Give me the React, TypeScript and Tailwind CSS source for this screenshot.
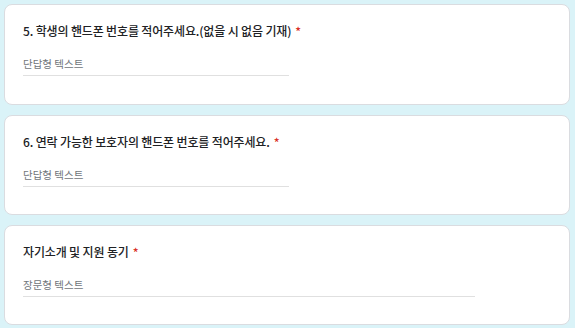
import React from "react";

const font = { fontFamily: '"Noto Sans CJK KR", "Noto Sans", Roboto, sans-serif' };

function Card({ title, placeholder, lineW, h }: { title: string; placeholder: string; lineW: string; h: string }) {
  return (
    <div className={`bg-white rounded-[8px] border border-[#dadce0] ${h} pl-[18px] pt-[18px]`}>
      <div className="text-[12px] leading-[16px] font-medium text-[#202124] tracking-[-0.15px]">
        {title}
        <span className="text-[#d93025] ml-[4px]">*</span>
      </div>
      <div className="mt-[18px] text-[10.5px] leading-[14px] text-[#70757a]">{placeholder}</div>
      <div className={`mt-[4px] h-[1px] bg-[#e0e0e0] ${lineW}`} />
    </div>
  );
}

export default function App() {
  return (
    <div className="w-[575px] h-[328px] bg-[#daf3f8] pl-[4px] pr-[5px] pt-[4px] flex flex-col gap-[10px]" style={font}>
      <Card h="h-[101px]" title="5. 학생의 핸드폰 번호를 적어주세요.(없을 시 없음 기재)" placeholder="단답형 텍스트" lineW="w-[266px]" />
      <Card h="h-[100px]" title="6. 연락 가능한 보호자의 핸드폰 번호를 적어주세요." placeholder="단답형 텍스트" lineW="w-[266px]" />
      <Card h="h-[100px]" title="자기소개 및 지원 동기" placeholder="장문형 텍스트" lineW="w-[452px]" />
    </div>
  );
}
